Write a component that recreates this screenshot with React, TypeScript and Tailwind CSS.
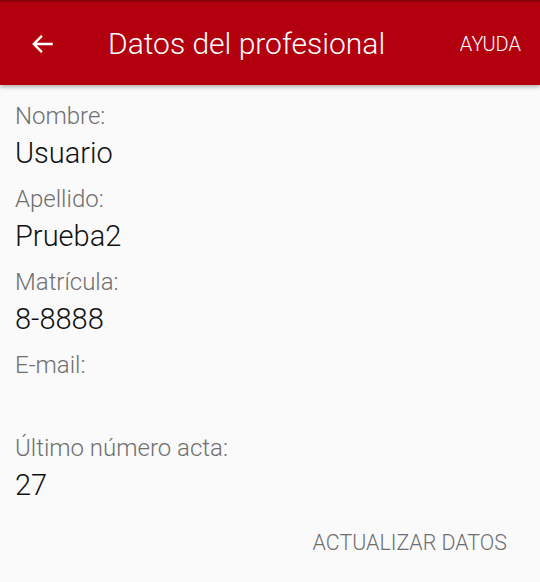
import React from "react";

const fields = [
  { label: "Nombre:", value: "Usuario" },
  { label: "Apellido:", value: "Prueba2" },
  { label: "Matrícula:", value: "8-8888" },
  { label: "E-mail:", value: "" },
  { label: "Último número acta:", value: "27" },
];

export default function App() {
  return (
    <div className="w-[540px] h-[582px] bg-[#fafafa] flex flex-col" style={{ fontFamily: "Roboto, sans-serif" }}>
      <div className="h-[85px] bg-[#b3000e] border-t-2 border-[#8c0009] flex items-center shadow-[0_2px_4px_rgba(0,0,0,0.3)] relative z-10">
        <div className="w-[84px] flex justify-center pl-[2px]">
          <svg width="26" height="26" viewBox="0 0 24 24" fill="none" stroke="white" strokeWidth="2.2">
            <path d="M21 12H3.5M11 4.5L3.5 12l7.5 7.5" />
          </svg>
        </div>
        <div className="flex-1 text-white text-[30px] font-light pl-[24px]">Datos del profesional</div>
        <div className="text-white text-[20px] font-light pr-[19px]">AYUDA</div>
      </div>
      <div className="flex flex-col pl-[15px] pt-[14px]">
        {fields.map((f) => (
          <div key={f.label} className="flex flex-col h-[83px]">
            <div className="text-[24px] font-light text-[#6f6f6f] h-[34px] leading-[34px]">{f.label}</div>
            <div className="text-[29px] font-light text-[#111111] h-[40px] leading-[40px]">{f.value}</div>
          </div>
        ))}
      </div>
      <div className="flex justify-end pr-[33px] mt-[13px]">
        <div className="text-[21.4px] font-light text-[#6f6f6f]">ACTUALIZAR DATOS</div>
      </div>
    </div>
  );
}
